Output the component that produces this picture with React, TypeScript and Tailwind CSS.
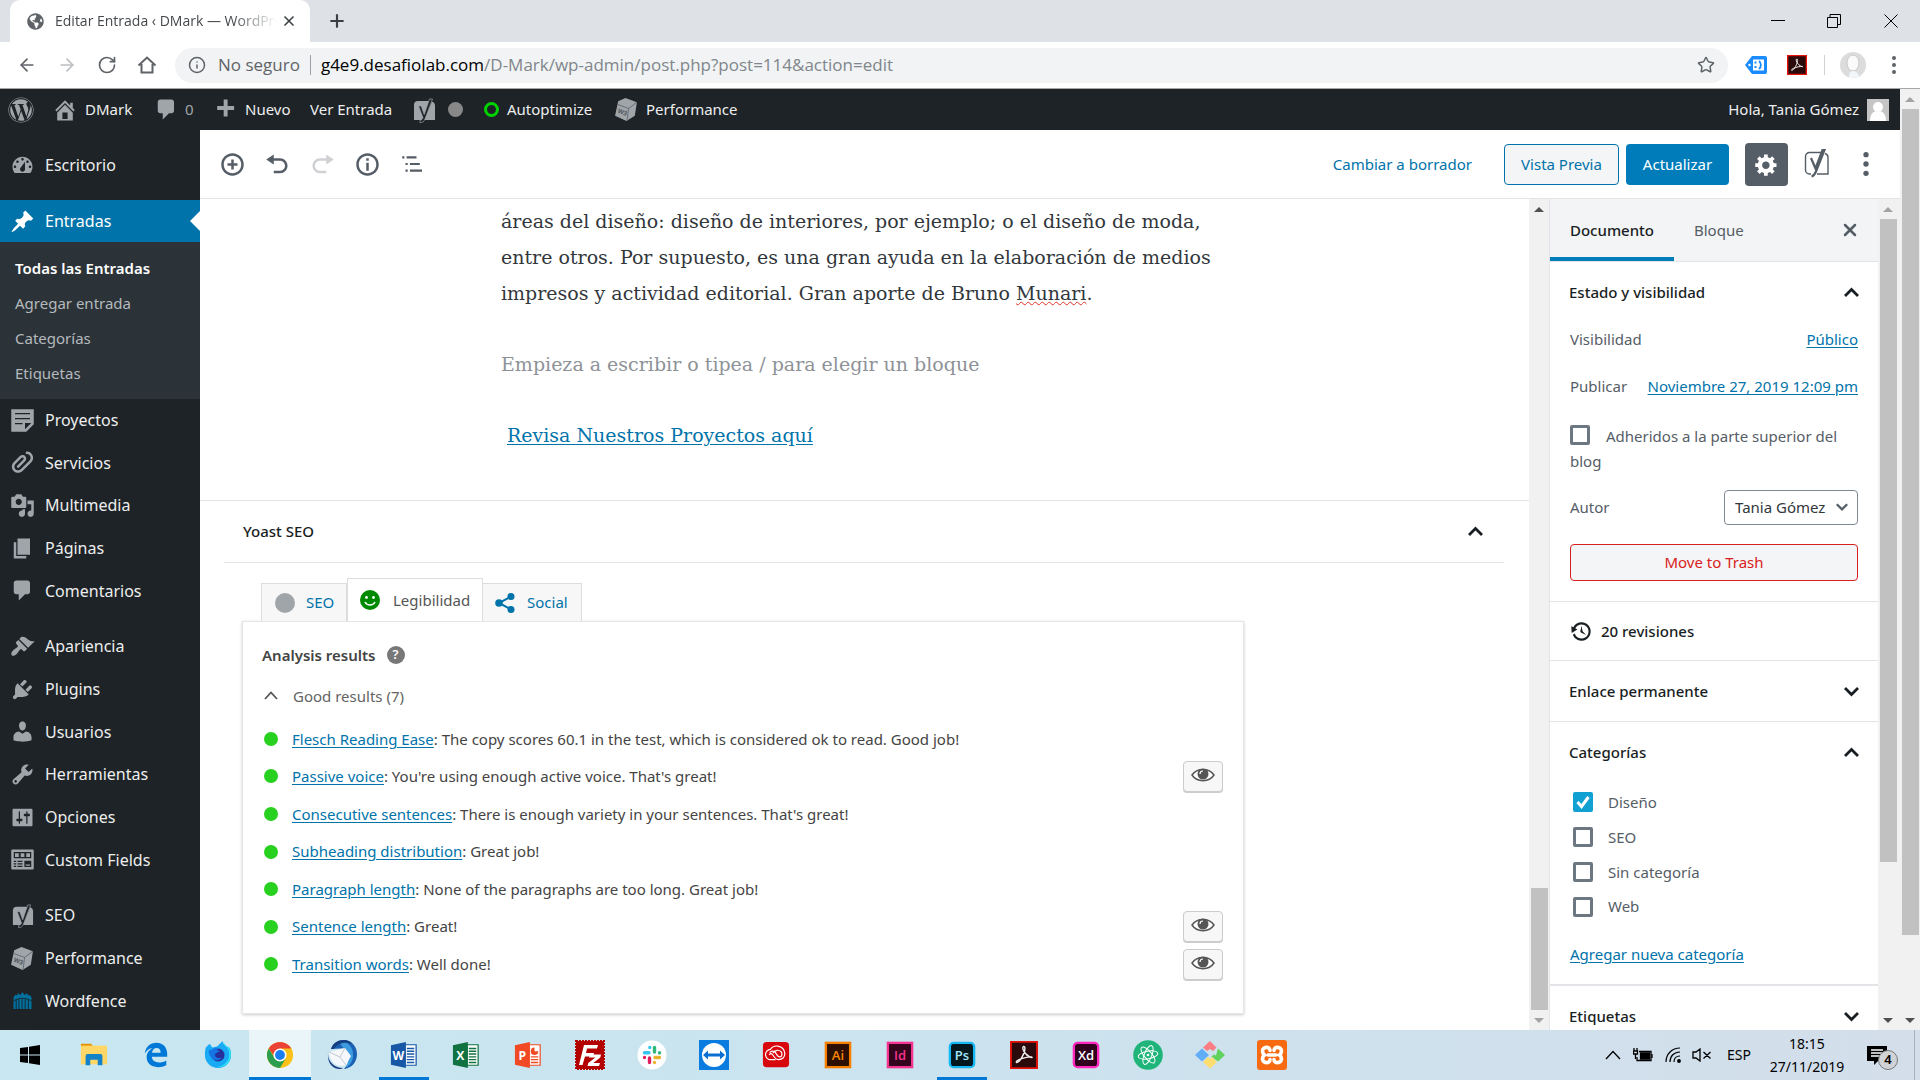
import React from "react";
import { ArrowLeft, ArrowRight, RotateCw, Info, Star, X, Plus } from "lucide-react";
import { FaWordpress, FaGlobeAmericas } from "react-icons/fa";

const ICONS = {
  dashboard:
    "M3.76 16h12.48c1.1-1.37 1.76-3.11 1.76-5 0-4.42-3.58-8-8-8s-8 3.58-8 8c0 1.89.66 3.63 1.76 5zM10 4c.55 0 1 .45 1 1s-.45 1-1 1-1-.45-1-1 .45-1 1-1zM6 6c.55 0 1 .45 1 1s-.45 1-1 1-1-.45-1-1 .45-1 1-1zm8 0c.55 0 1 .45 1 1s-.45 1-1 1-1-.45-1-1 .45-1 1-1zm-5.37 5.55L12 7v6c0 1.1-.9 2-2 2s-2-.9-2-2c0-.57.24-1.08.63-1.45zM4 10c.55 0 1 .45 1 1s-.45 1-1 1-1-.45-1-1 .45-1 1-1zm12 0c.55 0 1 .45 1 1s-.45 1-1 1-1-.45-1-1 .45-1 1-1z",
  home: "M16 8.5l1.53 1.53-1.06 1.06L10 4.6l-6.47 6.49-1.06-1.06L10 2.5l4 4v-2h2v4zm-6-2.46l6 5.99V18H4v-5.97zM12 17v-5H8v5h4z",
  comment: "M5 2h9c1.1 0 2 .9 2 2v7c0 1.1-.9 2-2 2h-2l-5 5v-5H5c-1.1 0-2-.9-2-2V4c0-1.1.9-2 2-2z",
  plus: "M17 7v3h-5v5H9v-5H4V7h5V2h3v5h5z",
  pin: "M10.44 3.02l1.82-1.82 6.36 6.35-1.83 1.82c-1.05-.68-2.48-.57-3.41.36l-.75.75c-.92.93-1.04 2.35-.35 3.41l-1.83 1.82-2.41-2.41-2.8 2.79c-.42.42-3.38 2.71-3.8 2.29s1.86-3.39 2.28-3.81l2.79-2.79L4.1 9.36l1.83-1.82c1.05.69 2.48.57 3.4-.36l.75-.75c.93-.92 1.05-2.35.36-3.41z",
  note: "M1 1h18v12l-6 6H1V1zm3 3v1h12V4H4zm0 4v1h12V8H4zm0 4v1h6v-1H4zm8 5l5-5h-5v5z",
  clip: "M17.05 2.7c1.93 1.94 1.93 5.13 0 7.07L10 16.84c-1.88 1.89-4.91 1.93-6.86.15-.06-.05-.13-.09-.19-.15-1.93-1.94-1.93-5.12 0-7.07l4.94-4.95c.91-.92 2.28-1.1 3.39-.58.3.15.59.33.83.58 1.17 1.17 1.17 3.07 0 4.24l-4.93 4.95c-.39.39-1.02.39-1.41 0s-.39-1.02 0-1.41l4.93-4.95c.39-.39.39-1.02 0-1.41-.38-.39-1.02-.39-1.4 0l-4.94 4.95c-.91.92-1.1 2.29-.57 3.4.14.3.32.59.57.84s.54.43.84.57c1.11.53 2.47.35 3.39-.57l7.05-7.07c1.16-1.17 1.16-3.08 0-4.25-.56-.55-1.28-.83-2-.86-.08.01-.16.01-.24 0-.22-.03-.43-.11-.6-.27-.39-.4-.38-1.05.02-1.45.16-.16.36-.24.56-.28.14-.02.27-.01.4.02 1.19.06 2.36.52 3.27 1.43z",
  media:
    "M13 11V4c0-.55-.45-1-1-1h-1.67L9 1H5L3.67 3H2c-.55 0-1 .45-1 1v7c0 .55.45 1 1 1h10c.55 0 1-.45 1-1zM7 4.5c1.38 0 2.5 1.12 2.5 2.5S8.38 9.5 7 9.5 4.5 8.38 4.5 7 5.62 4.5 7 4.5zM14 6h5v10.5c0 1.38-1.12 2.5-2.5 2.5S14 17.88 14 16.5s1.12-2.5 2.5-2.5c.17 0 .34.02.5.05V9h-3V6zm-4 8.05V13h2v3.5c0 1.38-1.12 2.5-2.5 2.5S7 17.88 7 16.5 8.12 14 9.5 14c.17 0 .34.02.5.05z",
  page: "M6 15V2h10v13H6zm-1 1h8v2H3V5h2v11z",
  brush:
    "M14.48 11.06L7.41 3.99l1.5-1.5c.5-.56 2.3-.47 3.51.32 1.21.8 1.43 1.28 2.91 2.1 1.18.64 2.45 1.26 4.45.85zm-.71.71L6.7 4.7 4.93 6.47c-.39.39-.39 1.02 0 1.41l1.06 1.06c.39.39.39 1.03 0 1.42-.6.6-1.43 1.11-2.21 1.69-.35.26-.7.53-1.01.84C1.43 14.23.4 16.08 1.4 17.07c.99 1 2.84-.03 4.18-1.36.31-.31.58-.66.85-1.02.57-.78 1.08-1.61 1.69-2.21.39-.39 1.02-.39 1.41 0l1.06 1.06c.39.39 1.02.39 1.41 0z",
  plug: "M13.11 4.36L9.87 7.6 8 5.73l3.24-3.24c.35-.34 1.05-.2 1.56.32.52.51.66 1.21.31 1.55zm-8 1.77l.91-1.12 9.01 9.01-1.19.84c-.71.71-2.63 1.16-3.82 1.16H6.14L4.9 17.26c-.59.59-1.54.59-2.12 0-.59-.58-.59-1.53 0-2.12l1.24-1.24v-3.88c0-1.13.4-3.19 1.09-3.89zm7.26 3.97l3.24-3.24c.34-.35 1.04-.21 1.55.31.52.51.66 1.21.31 1.55l-3.24 3.25z",
  user: "M10 9.25c-2.27 0-2.73-3.44-2.73-3.44C7 4.02 7.82 2 9.97 2c2.16 0 2.98 2.02 2.71 3.81 0 0-.41 3.44-2.68 3.44zm0 2.57L12.72 10c2.39 0 4.52 2.33 4.52 4.53v2.49s-3.65 1.13-7.24 1.13c-3.65 0-7.24-1.13-7.24-1.13v-2.49c0-2.25 1.94-4.48 4.47-4.48z",
  wrench:
    "M16.68 9.77c-1.34 1.34-3.3 1.67-4.95.99l-5.41 6.52c-.99.99-2.59.99-3.58 0s-.99-2.59 0-3.57l6.52-5.42c-.68-1.65-.35-3.61.99-4.95 1.28-1.28 3.12-1.62 4.72-1.06l-2.89 2.89 2.82 2.82 2.86-2.87c.53 1.58.18 3.39-1.08 4.65zM3.81 16.21c.4.39 1.04.39 1.43 0 .4-.4.4-1.04 0-1.43-.39-.4-1.03-.4-1.43 0-.39.39-.39 1.03 0 1.43z",
  sliders:
    "M18 16V4c0-.55-.45-1-1-1H3c-.55 0-1 .45-1 1v12c0 .55.45 1 1 1h14c.55 0 1-.45 1-1zM8 11h1c.55 0 1 .45 1 1s-.45 1-1 1H8v1.5c0 .28-.22.5-.5.5s-.5-.22-.5-.5V13H6c-.55 0-1-.45-1-1s.45-1 1-1h1V5.5c0-.28.22-.5.5-.5s.5.22.5.5V11zm5-2h-1c-.55 0-1-.45-1-1s.45-1 1-1h1V5.5c0-.28.22-.5.5-.5s.5.22.5.5V7h1c.55 0 1 .45 1 1s-.45 1-1 1h-1v5.5c0 .28-.22.5-.5.5s-.5-.22-.5-.5V9z",
  fields:
    "M2 2h16c.6 0 1 .4 1 1v14c0 .6-.4 1-1 1H2c-.6 0-1-.4-1-1V3c0-.6.4-1 1-1zm1 2v5h14V4H3zm1 1h3v3H4V5zm4.500 0h3v3h-3V5zM13 5h3v3h-3V5zM3 11v1h2v-1H3zm3 0v1h4v-1H6zm-3 2v1h2v-1H3zm3 0v1h4v-1H6zm-3 2v1h2v-1H3zm3 0v1h4v-1H6zm5.500-4v5H17v-5h-5.500zm1 3H16v1h-3.500v-1z",
  history:
    "M13.65 2.88c3.93 2.01 5.48 6.84 3.47 10.77s-6.83 5.48-10.77 3.47c-1.87-.96-3.2-2.56-3.86-4.4l1.64-1.03c.45 1.57 1.52 2.95 3.08 3.76 3.01 1.54 6.69.35 8.23-2.66 1.55-3.01.36-6.69-2.65-8.24C9.78 3.01 6.1 4.2 4.56 7.21l1.88.97-4.95 3.08-.39-5.82 1.78.91C4.9 2.4 9.75.89 13.65 2.88zm-4.36 7.83C9.11 10.53 9 10.28 9 10c0-.07.03-.12.04-.19h-.01L10 5l.97 4.81L14 13l-4.5-2.12.02-.02c-.08-.04-.16-.09-.23-.15z",
  insert:
    "M10 1c-5 0-9 4-9 9s4 9 9 9 9-4 9-9-4-9-9-9zm0 16c-3.9 0-7-3.1-7-7s3.1-7 7-7 7 3.1 7 7-3.1 7-7 7zm1-11H9v3H6v2h3v3h2v-3h3V9h-3V6z",
  undo: "M12 5H7V2L1 6l6 4V7h5c2.2 0 4 1.8 4 4s-1.8 4-4 4H7v2h5c3.3 0 6-2.7 6-6s-2.7-6-6-6z",
  redo: "M8 5h5V2l6 4-6 4V7H8c-2.200 0-4 1.800-4 4s1.800 4 4 4h5v2H8c-3.300 0-6-2.700-6-6s2.700-6 6-6z",
  info: "M10 1c-5 0-9 4-9 9s4 9 9 9 9-4 9-9-4-9-9-9zm0 16c-3.9 0-7-3.1-7-7s3.1-7 7-7 7 3.1 7 7-3.1 7-7 7zM9 5h2v2H9zM9 8.500h2V15H9z",
  outline: "M2 3h2v2H2zM6 3h9v2H6zM5 9h2v2H5zM9 9h9v2H9zM5 15h2v2H5zM9 15h11v2H9z",
  gear: "M18 12h-2.18c-.17.7-.44 1.35-.81 1.93l1.54 1.54-2.1 2.1-1.54-1.54c-.58.36-1.23.63-1.91.79V19H8v-2.18c-.68-.16-1.33-.43-1.91-.79l-1.54 1.54-2.12-2.12 1.54-1.54c-.36-.58-.63-1.23-.79-1.91H1V9.03h2.17c.16-.7.44-1.35.8-1.94L2.43 5.55l2.1-2.1 1.54 1.54c.58-.37 1.24-.64 1.93-.81V2h3v2.18c.68.16 1.33.43 1.91.79l1.54-1.54 2.12 2.12-1.54 1.54c.36.59.64 1.24.8 1.94H18V12zm-8.5 1.5c1.66 0 3-1.34 3-3s-1.34-3-3-3-3 1.34-3 3 1.34 3 3 3z",
};

function Dash({ d, className = "size-[25px]" }: { d: string; className?: string }) {
  return (
    <svg viewBox="0 0 20 20" className={`${className} shrink-0`} fill="currentColor" fillRule="evenodd" aria-hidden="true">
      <path d={d} />
    </svg>
  );
}

function Yoast({ className = "size-[25px]" }: { className?: string }) {
  return (
    <svg viewBox="0 0 24 26" className={`${className} shrink-0`} aria-hidden="true">
      <path d="M6 4h12.500L10.500 23H2V8a4 4 0 0 1 4-4zM20 4.500A4 4 0 0 1 23 8v15H12z" fill="currentColor" />
      <path d="M6.500 9h2.700l3 8.500L17.500 2h3L13 22c-1.100 2.700-2.600 3.700-5 3.800v-2.500c1.500-.2 2.300-.9 3-2.500z" fill="#1d2327" stroke="#a0a5aa" strokeWidth=".7" />
    </svg>
  );
}

function YoastOutline() {
  return (
    <svg viewBox="0 0 26 30" className="h-[30px] w-[26px]" fill="none" stroke="#555d66" aria-hidden="true">
      <path d="M17 3.500H5.500a4 4 0 0 0-4 4V21a4 4 0 0 0 4 4H7M21 4.500c2 .7 3 2 3 4V25H13" strokeWidth="1.400" />
      <path d="M7 9l4.500 10.500L18.500 1h2L12 22.500c-1.300 3.300-2.800 4.500-4.500 4.800" strokeWidth="2.200" />
    </svg>
  );
}

function Cube() {
  return (
    <svg viewBox="0 0 24 24" className="size-[25px] shrink-0" aria-hidden="true">
      <path d="M4 4l7-3 11 4-2 13-8 5L1 18z" fill="#a0a5aa" />
      <path d="M3 7l11 4 8-6M14 11l-1.500 12" stroke="#5d6268" strokeWidth=".8" fill="none" />
      <text x="3" y="15" fontSize="6" fontWeight="700" fill="#50565c" transform="rotate(20 3 15)" fontFamily="Open Sans">W3</text>
    </svg>
  );
}

function Fence() {
  return (
    <svg viewBox="0 0 24 20" className="h-[18px] w-[25px] shrink-0" fill="#00709e" aria-hidden="true">
      <path d="M2 6l2-3 2 1 1-3 2 2h1l2-3 2 3h1l2-2 1 3 2-1 2 3v13H2z" />
      <path d="M5 8v11M8 8v11M11.500 8v11M15 8v11M18.500 8v11M2 10c6-4 14-4 20 0" stroke="#1d2327" strokeWidth="1" fill="none" />
    </svg>
  );
}

function Chevron({ up = false, className = "size-[25px]" }: { up?: boolean; className?: string }) {
  return (
    <svg viewBox="0 0 25 25" className={`${className} shrink-0`} fill="none" stroke="currentColor" strokeWidth="2.800" aria-hidden="true">
      <path d={up ? "M6 16l6.500-6.500L19 16" : "M6 9l6.500 6.500L19 9"} />
    </svg>
  );
}

function Arrow({ up = false, dark = false }: { up?: boolean; dark?: boolean }) {
  return (
    <svg viewBox="0 0 20 20" className="size-5" fill={dark ? "#505050" : "#a3a3a3"} aria-hidden="true">
      <path d={up ? "M5 13h10l-5-5z" : "M5 8h10l-5 5z"} />
    </svg>
  );
}

function Scrollbar({ top, bottom, size, upDark, downDark }: { top: string; bottom: string; size: string; upDark?: boolean; downDark?: boolean }) {
  return (
    <div className="flex w-5 shrink-0 flex-col items-center bg-[#f1f1f1]">
      <Arrow up dark={upDark} />
      <div className={`${top}`} />
      <div className={`${size} w-[17px] bg-[#c1c1c1]`} />
      <div className={`${bottom}`} />
      <Arrow dark={downDark} />
    </div>
  );
}

function ChromeBar() {
  return (
    <header className="font-['Open_Sans',sans-serif]">
      <div className="flex h-[42px] items-stretch bg-[#dee1e6] pl-[10px]">
        <div className="flex w-[300px] items-center rounded-t-[10px] bg-white pr-[13px] pl-[17px] text-sm text-[#45494d]">
          <FaGlobeAmericas className="size-[17px] shrink-0 text-[#5f6368]" />
          <span className="ml-[11px] flex-1 overflow-hidden whitespace-nowrap [mask-image:linear-gradient(to_right,black_80%,transparent)]">
            Editar Entrada ‹ DMark — WordPress
          </span>
          <button aria-label="Cerrar pestaña" className="ml-1"><X className="size-4 text-[#3c4043]" strokeWidth={2.5} /></button>
        </div>
        <button aria-label="Nueva pestaña" className="ml-[17px]"><Plus className="size-5 text-[#3c4043]" strokeWidth={2.6} /></button>
        <div className="ml-auto flex items-center text-black">
          <button aria-label="Minimizar" className="flex w-14 justify-center"><svg viewBox="0 0 14 14" className="size-[14px]"><path d="M0 6.500h14" stroke="currentColor" /></svg></button>
          <button aria-label="Restaurar" className="flex w-14 justify-center"><svg viewBox="0 0 14 14" className="size-[14px]" fill="none" stroke="currentColor"><path d="M.5 3.500h10v10H.5zM3 3.500V.5h10.500v10H11" /></svg></button>
          <button aria-label="Cerrar" className="flex w-[58px] justify-center"><svg viewBox="0 0 14 14" className="size-[14px]" fill="none" stroke="currentColor"><path d="M.5.5l13 13M13.500.5l-13 13" /></svg></button>
        </div>
      </div>
      <div className="flex h-[47px] items-center border-b border-[#a6a6a6] bg-white text-[#5f6368]">
        <button aria-label="Atrás" className="ml-[17px]"><ArrowLeft className="size-5" /></button>
        <button aria-label="Adelante" className="ml-5 text-[#bcbec1]"><ArrowRight className="size-5" /></button>
        <button aria-label="Recargar" className="ml-5"><RotateCw className="size-5" /></button>
        <button aria-label="Inicio" className="ml-5">
          <svg viewBox="0 0 20 20" className="size-5" fill="none" stroke="currentColor" strokeWidth="2"><path d="M1.500 10.500L10 2.500l8.500 8M4.500 9v8.500h11V9" /></svg>
        </button>
        <div className="ml-[18px] flex h-[35px] flex-1 items-center rounded-full bg-[#f1f3f4] px-[13px] text-[17px]">
          <Info className="size-[18px]" />
          <span className="ml-3">No seguro</span>
          <span className="mx-[10px] h-5 w-px bg-[#9aa0a6]" />
          <p className="flex-1"><span className="text-black">g4e9.desafiolab.com</span><span className="text-[#80868b]">/D-Mark/wp-admin/post.php?post=114&amp;action=edit</span></p>
          <button aria-label="Marcador"><Star className="size-[18px]" /></button>
        </div>
        <svg viewBox="0 0 22 18" className="ml-[17px] h-[18px] w-[22px]" aria-hidden="true">
          <path d="M7 0h13a2 2 0 0 1 2 2v14a2 2 0 0 1-2 2H7L0 9z" fill="#1a8cff" /><path d="M8 3.500h11v11H8z" fill="#fff" />
          <path d="M9.500 5.500h2v2h-2zM9.500 10h2v2h-2z" fill="#1a8cff" /><path d="M14 5c2.500 2 2.500 6 0 8" fill="none" stroke="#1a8cff" strokeWidth="1.800" /><circle cx="4.500" cy="9" r="1.200" fill="#fff" />
        </svg>
        <svg viewBox="0 0 30 30" className="ml-5 size-5" aria-hidden="true"><AcrobatArt /></svg>
        <span className="ml-[17px] h-5 w-px bg-[#d0d2d5]" />
        <svg viewBox="0 0 26 26" className="ml-[15px] size-[26px]" aria-hidden="true">
          <circle cx="13" cy="13" r="13" fill="#dcdcdc" /><ellipse cx="13" cy="11" rx="6" ry="8" fill="#fafafa" stroke="#c9c9c9" /><path d="M9 26c0-5 1-7 4-7s5 2 6 5c-3 2-7 2-10 2z" fill="#f1f6fa" />
        </svg>
        <button aria-label="Menú" className="mr-[6px] ml-2 flex w-10 justify-center"><Dots className="h-[18px] w-1" /></button>
      </div>
    </header>
  );
}

function Dots({ className }: { className: string }) {
  return (
    <svg viewBox="0 0 4 18" className={className} fill="currentColor" aria-hidden="true">
      <circle cx="2" cy="2" r="2" /><circle cx="2" cy="9" r="2" /><circle cx="2" cy="16" r="2" />
    </svg>
  );
}

function AdminBar() {
  return (
    <nav className="flex h-[41px] items-center bg-[#1d2327] pl-2 text-[15px] text-[#eee]">
      <a href="#wp" aria-label="WordPress"><FaWordpress className="size-[26px] text-[#a0a5aa]" /></a>
      <a href="#site" className="ml-[18px] flex w-[102px] items-center gap-[7px]"><Dash d={ICONS.home} className="size-[26px] text-[#a0a5aa]" />DMark</a>
      <a href="#comments" className="flex w-[58px] items-center gap-[6px] text-[#a0a5aa]"><Dash d={ICONS.comment} />0</a>
      <a href="#new" className="flex w-[98px] items-center gap-[7px]"><Dash d={ICONS.plus} className="size-[26px] text-[#a0a5aa]" />Nuevo</a>
      <a href="#view" className="w-[102px]">Ver Entrada</a>
      <a href="#yoast" className="flex w-[72px] items-center gap-3 text-[#a0a5aa]"><Yoast className="h-[26px] w-6" /><span className="size-[15px] rounded-full bg-[#888]" /></a>
      <a href="#autoptimize" className="flex w-[130px] items-center gap-2"><span className="size-[15px] rounded-full border-3 border-[#00d200]" />Autoptimize</a>
      <a href="#performance" className="flex items-center gap-[7px]"><Cube />Performance</a>
      <a href="#profile" className="mr-[11px] ml-auto flex items-center gap-2">
        Hola, Tania Gómez
        <svg viewBox="0 0 22 22" className="size-[22px]" aria-hidden="true"><path d="M0 0h22v22H0z" fill="#c5c5c5" /><circle cx="11" cy="8" r="5" fill="#fff" /><path d="M3 22c0-7 3-10 8-10s8 3 8 10z" fill="#fff" /></svg>
      </a>
    </nav>
  );
}

function MenuItem({ icon, children }: { icon: React.ReactNode; children: React.ReactNode }) {
  return (
    <a href="#menu" className="flex flex-1 items-center gap-[10px] pl-[10px] text-[#eee]">
      <span className="flex w-[25px] justify-center text-[#a0a5aa]">{icon}</span>
      {children}
    </a>
  );
}

function AdminMenu() {
  return (
    <aside className="flex w-[200px] shrink-0 flex-col bg-[#1d2327] text-base">
      <div className="mt-[14px] flex h-[42px]"><MenuItem icon={<Dash d={ICONS.dashboard} />}>Escritorio</MenuItem></div>
      <div className="relative mt-[14px] flex h-[42px] items-center gap-[10px] bg-[#0073aa] pl-[10px] text-white">
        <Dash d={ICONS.pin} />
        <a href="#posts">Entradas</a>
        <span className="absolute top-[11px] right-0 border-y-10 border-r-10 border-y-transparent border-r-white" />
      </div>
      <div className="flex h-[157px] flex-col justify-between bg-[#2c3338] py-[9px] pl-[15px] text-[15px] leading-[35px] text-[#b4b9be]">
        <a href="#all" className="font-semibold text-white">Todas las Entradas</a>
        <a href="#add">Agregar entrada</a>
        <a href="#cats">Categorías</a>
        <a href="#tags">Etiquetas</a>
      </div>
      <div className="flex h-[213px] flex-col">
        <MenuItem icon={<Dash d={ICONS.note} />}>Proyectos</MenuItem>
        <MenuItem icon={<Dash d={ICONS.clip} />}>Servicios</MenuItem>
        <MenuItem icon={<Dash d={ICONS.media} />}>Multimedia</MenuItem>
        <MenuItem icon={<Dash d={ICONS.page} />}>Páginas</MenuItem>
        <MenuItem icon={<Dash d={ICONS.comment} />}>Comentarios</MenuItem>
      </div>
      <div className="mt-[13px] flex h-[256px] flex-col">
        <MenuItem icon={<Dash d={ICONS.brush} />}>Apariencia</MenuItem>
        <MenuItem icon={<Dash d={ICONS.plug} />}>Plugins</MenuItem>
        <MenuItem icon={<Dash d={ICONS.user} />}>Usuarios</MenuItem>
        <MenuItem icon={<Dash d={ICONS.wrench} />}>Herramientas</MenuItem>
        <MenuItem icon={<Dash d={ICONS.sliders} />}>Opciones</MenuItem>
        <MenuItem icon={<Dash d={ICONS.fields} />}>Custom Fields</MenuItem>
      </div>
      <div className="mt-[13px] flex h-[128px] flex-col">
        <MenuItem icon={<Yoast />}>SEO</MenuItem>
        <MenuItem icon={<Cube />}>Performance</MenuItem>
        <MenuItem icon={<Fence />}>Wordfence</MenuItem>
      </div>
    </aside>
  );
}

function EditorHeader() {
  return (
    <div className="flex h-[69px] shrink-0 items-center border-b border-[#e2e4e7] bg-white pl-5 text-[15px]">
      <div className="flex gap-5 text-[#555d66]">
        <button aria-label="Añadir bloque"><Dash d={ICONS.insert} /></button>
        <button aria-label="Deshacer"><Dash d={ICONS.undo} /></button>
        <button aria-label="Rehacer" className="text-[#cfd1d4]"><Dash d={ICONS.redo} /></button>
        <button aria-label="Información"><Dash d={ICONS.info} /></button>
        <button aria-label="Navegación"><Dash d={ICONS.outline} className="size-[22px]" /></button>
      </div>
      <a href="#draft" className="mr-8 ml-auto text-[#0073aa]">Cambiar a borrador</a>
      <button className="h-[41px] w-[115px] rounded-[4px] border border-[#0073aa] bg-[#f3f5f6] text-[#0073aa]">Vista Previa</button>
      <button className="ml-[7px] h-[41px] w-[103px] rounded-[4px] bg-[#007cba] text-white">Actualizar</button>
      <button aria-label="Ajustes" className="ml-4 flex size-[43px] items-center justify-center rounded-[4px] bg-[#555d66] text-white"><Dash d={ICONS.gear} /></button>
      <button aria-label="Yoast SEO" className="ml-4"><YoastOutline /></button>
      <button aria-label="Más opciones" className="mr-[31px] ml-[33px] text-[#555d66]"><Dots className="h-6 w-[6px]" /></button>
    </div>
  );
}

const RESULTS = [
  { name: "Flesch Reading Ease", text: "The copy scores 60.1 in the test, which is considered ok to read. Good job!" },
  { name: "Passive voice", text: "You're using enough active voice. That's great!", eye: true },
  { name: "Consecutive sentences", text: "There is enough variety in your sentences. That's great!" },
  { name: "Subheading distribution", text: "Great job!" },
  { name: "Paragraph length", text: "None of the paragraphs are too long. Great job!" },
  { name: "Sentence length", text: "Great!", eye: true },
  { name: "Transition words", text: "Well done!", eye: true },
];

function Eye() {
  return (
    <svg viewBox="0 0 24 14" className="h-[14px] w-6" aria-hidden="true">
      <path d="M1 7c5-7.500 17-7.500 22 0-5 7.500-17 7.500-22 0z" fill="#fff" stroke="#555" strokeWidth="1.500" />
      <circle cx="12" cy="6" r="5.500" fill="#555" />
      <path d="M9 6c0-2 1-3 3-3" stroke="#fff" strokeWidth="1.200" fill="none" />
    </svg>
  );
}

function YoastPanel() {
  return (
    <section className="border-t border-[#e2e4e7] pr-[25px] pl-6 text-[15px]">
      <div className="flex h-[62px] items-center justify-between border-b border-[#e2e4e7] pr-4 pl-[19px] text-[#191e23]">
        <h2 className="font-medium">Yoast SEO</h2>
        <button aria-label="Contraer"><Chevron up /></button>
      </div>
      <div className="mt-[15px] ml-[37px] flex items-end text-[#0073aa]" role="tablist">
        <button role="tab" className="flex h-[38px] w-[86px] items-center gap-[11px] border border-b-0 border-[#ddd] bg-[#f7f7f7] pl-[13px]"><span className="size-5 rounded-full bg-[#a0a5aa]" />SEO</button>
        <button role="tab" aria-selected="true" className="flex h-[43px] w-[136px] items-center gap-[13px] border border-b-0 border-[#ddd] bg-white pl-3 text-[#555]">
          <svg viewBox="0 0 20 20" className="size-5" aria-hidden="true"><circle cx="10" cy="10" r="10" fill="#008a00" /><circle cx="6.500" cy="7.500" r="1.400" fill="#fff" /><circle cx="13.500" cy="7.500" r="1.400" fill="#fff" /><path d="M5 12c2 4 8 4 10 0" stroke="#fff" strokeWidth="1.600" fill="none" /></svg>
          Legibilidad
        </button>
        <button role="tab" className="flex h-[38px] w-[99px] items-center gap-3 border border-b-0 border-l-0 border-[#ddd] bg-[#f7f7f7] pl-3">
          <svg viewBox="0 0 20 20" className="size-5" fill="#0073aa" aria-hidden="true"><circle cx="4" cy="10" r="3.800" /><circle cx="16" cy="3.500" r="3.500" /><circle cx="16" cy="16.500" r="3.500" /><path d="M16 3.500L4 10l12 6.500" stroke="#0073aa" strokeWidth="2" fill="none" /></svg>
          Social
        </button>
      </div>
      <div className="ml-[18px] h-[393px] w-[1002px] border border-[#e5e5e5] bg-white px-[19px] pt-[19px] text-[#444] shadow-[0_1px_3px_rgba(0,0,0,0.2)]">
        <div className="flex h-7 items-center gap-[11px] font-semibold">
          Analysis results
          <span className="flex size-[18px] items-center justify-center rounded-full bg-[#787878] text-[13px] text-white">?</span>
        </div>
        <button className="mt-3 flex h-[30px] items-center gap-[13px] text-[#646464]">
          <svg viewBox="0 0 18 18" className="size-[18px]" fill="none" stroke="#555" strokeWidth="1.800" aria-hidden="true"><path d="M3 12l6-6.500L15 12" /></svg>
          Good results (7)
        </button>
        <ul className="mt-[9px] flex h-[263px] flex-col pr-px">
          {RESULTS.map((r) => (
            <li key={r.name} className="flex flex-1 items-center">
              <span className="mr-[14px] ml-[2px] size-[14px] rounded-full bg-[#28d01f]" />
              <p className="flex-1"><a href="#result" className="text-[#0073aa] underline underline-offset-2">{r.name}</a>: {r.text}</p>
              {r.eye && <button aria-label={`Resaltar ${r.name}`} className="flex h-[31px] w-10 justify-center rounded-[4px] border border-[#ccc] bg-[#f7f7f7] pt-[6px] shadow-[0_1px_0_#ccc]"><Eye /></button>}
            </li>
          ))}
        </ul>
      </div>
    </section>
  );
}

function Editor() {
  return (
    <main className="min-w-0 flex-1 overflow-hidden bg-white">
      <div className="h-[301px] pt-1 pl-[301px] font-['DejaVu_Serif',serif] text-[19px] leading-9 whitespace-nowrap text-[#32373c]">
        <p>
          áreas del diseño: diseño de interiores, por ejemplo; o el diseño de moda,<br />
          entre otros. Por supuesto, es una gran ayuda en la elaboración de medios<br />
          impresos y actividad editorial. Gran aporte de Bruno <span className="underline decoration-[#e0302a] decoration-wavy decoration-1">Munari</span>.
        </p>
        <p className="mt-[35px] text-[#8d9297]">Empieza a escribir o tipea / para elegir un bloque</p>
        <p className="mt-[35px] pl-[6px]"><a href="#proyectos" className="text-[#0073aa] underline underline-offset-2">Revisa Nuestros Proyectos aquí</a></p>
      </div>
      <YoastPanel />
    </main>
  );
}

function Check({ id, label, checked, gap }: { id: string; label: string; checked?: boolean; gap: string }) {
  return (
    <>
      <span className={`relative ${gap} inline-flex size-5 shrink-0 align-[-3px]`}>
        <input id={id} type="checkbox" defaultChecked={checked} className="size-5 appearance-none rounded-[2px] border-3 border-[#6c7781] bg-white checked:border-[#11a0d2] checked:bg-[#11a0d2]" />
        {checked && <svg viewBox="0 0 20 20" className="pointer-events-none absolute inset-0 size-5" fill="none" stroke="#fff" strokeWidth="3" aria-hidden="true"><path d="M4.500 10l4 4.500L15.500 5" /></svg>}
      </span>
      <label htmlFor={id}>{label}</label>
    </>
  );
}

function PanelTitle({ children, open }: { children: React.ReactNode; open?: boolean }) {
  return (
    <button className="flex h-[60px] w-full items-center justify-between pr-[14px] pl-[19px] font-medium text-[#191e23]">
      {children}
      <Chevron up={open} />
    </button>
  );
}

function DocumentSidebar() {
  return (
    <aside className="w-[329px] shrink-0 overflow-hidden border-l border-[#e2e4e7] bg-white text-[15px] text-[#555d66]">
      <div className="flex h-[63px] items-stretch border-b border-[#e2e4e7] bg-[#f3f4f5]">
        <button className="w-[124px] border-b-4 border-[#007cba] pt-1 font-medium text-[#191e23]">Documento</button>
        <button className="px-5 pt-1 pb-1">Bloque</button>
        <button aria-label="Cerrar ajustes" className="mr-[18px] ml-auto"><X className="size-5" strokeWidth={3} /></button>
      </div>
      <section className="h-[340px] border-b border-[#e2e4e7]">
        <PanelTitle open>Estado y visibilidad</PanelTitle>
        <div className="px-5">
          <div className="flex h-[34px] items-center justify-between"><span>Visibilidad</span><a href="#vis" className="text-[#0073aa] underline underline-offset-2">Público</a></div>
          <div className="mt-[13px] flex h-[34px] items-center justify-between whitespace-nowrap"><span>Publicar</span><a href="#date" className="text-[#0073aa] underline underline-offset-2">Noviembre 27, 2019 12:09 pm</a></div>
          <p className="mt-[21px] leading-[25px]"><Check id="sticky" label="Adheridos a la parte superior del blog" gap="mr-4" /></p>
          <div className="mt-4 flex h-[35px] items-center justify-between">
            <label htmlFor="author">Autor</label>
            <span className="relative flex">
              <select id="author" className="h-[35px] w-[134px] appearance-none rounded-[4px] border border-[#7e8993] bg-white pl-[10px] text-[#32373c]"><option>Tania Gómez</option></select>
              <Chevron className="pointer-events-none absolute top-[7px] right-[6px] size-5" />
            </span>
          </div>
          <button className="mt-[19px] h-[37px] w-full rounded-[4px] border border-[#d92020] bg-[#f3f5f6] text-[#d92020]">Move to Trash</button>
        </div>
      </section>
      <button className="flex h-[59px] w-full items-center gap-2 border-b border-[#e2e4e7] pl-5 font-medium text-[#191e23]"><Dash d={ICONS.history} className="size-[23px]" />20 revisiones</button>
      <div className="border-b border-[#e2e4e7]"><PanelTitle>Enlace permanente</PanelTitle></div>
      <section className="h-[264px] border-b-2 border-[#e2e4e7]">
        <PanelTitle open>Categorías</PanelTitle>
        <ul className="mt-[3px] flex h-[139px] flex-col pl-[23px]">
          {["Diseño", "SEO", "Sin categoría", "Web"].map((c, i) => (
            <li key={c} className="flex flex-1 items-center"><Check id={`cat-${i}`} label={c} checked={i === 0} gap="mr-[15px]" /></li>
          ))}
        </ul>
        <a href="#newcat" className="mt-[19px] ml-5 inline-block text-[#0073aa] underline underline-offset-2">Agregar nueva categoría</a>
      </section>
      <PanelTitle>Etiquetas</PanelTitle>
    </aside>
  );
}

function AcrobatArt() {
  return (
    <>
      <path d="M1 1h28v28H1z" fill="#2a0a0a" stroke="#e8140c" strokeWidth="2" />
      <path d="M7 23c-2-2 9-6 16-6 3 2-6 0-9-8-1-4 2-4 2-1 0 4-5 15-9 15z" fill="none" stroke="#eee" strokeWidth="1.500" />
    </>
  );
}

function Adobe({ text, edge, bg, fg, round }: { text: string; edge: string; bg: string; fg: string; round?: boolean }) {
  return (
    <>
      <rect x="2" y="2" width="26" height="26" rx={round ? 4 : 0} fill={bg} stroke={edge} strokeWidth="2.500" />
      <text x="15" y="20" textAnchor="middle" fontFamily="Open Sans" fontSize="14" fontWeight="600" fill={fg}>{text}</text>
    </>
  );
}

function Office({ letter, color }: { letter: string; color: string }) {
  return (
    <>
      <path d="M16 4h12v22H16z" fill="#fff" stroke={color} strokeWidth="1.300" />
      <path d="M18 8h8M18 11h8M18 14h8M18 17h8M18 20h8M18 23h8" stroke={color} strokeWidth="1.500" />
      <path d="M1 4.500L17 1v28L1 25.500z" fill={color} />
      <text x="9" y="20" textAnchor="middle" fontFamily="Open Sans" fontSize="13" fontWeight="700" fill="#fff">{letter}</text>
    </>
  );
}

const APPS: { name: string; active?: boolean; open?: boolean; large?: boolean; art: React.ReactNode }[] = [
  { name: "Explorador", art: <><path d="M1 3h11l2 3H1z" fill="#e59400" /><path d="M1 5h28v20H1z" fill="#ffd766" /><path d="M6 26V16a2 2 0 0 1 2-2h14a2 2 0 0 1 2 2v10h-5v-6h-8v6z" fill="#1283c9" /></> },
  { name: "Edge", art: <path d="M3 13.500C4 6 9 2 15.500 2 23 2 27 7.500 27 14v3H10.500c.3 4 3.500 6 7.500 6 3 0 5.500-.7 8-2.200V26c-2.500 1.400-5.500 2-9 2C9.500 28 5 23.500 5 17.500c0-4.500 2.500-8 6.500-10C7.500 8 5 10 3 13.500zM10.700 12.500H20c0-3-1.500-5-4.300-5-2.700 0-4.500 2-5 5z" fill="#0078d7" /> },
  { name: "Firefox", art: <><path d="M2 7l4-4 3 4 5-1 6-6c0 3 2 4 4 6l3 1c2 3 2 5 2 8a14 14 0 0 1-28 0c0-3 0-5 1-8z" fill="#18aaf5" /><path d="M20 1c4 3 7 8 7 14s-5 12-13 13c9 1 15-6 15-13 0-4-1-6-3-9l-2 1c-1-2-3-3-4-6z" fill="#2fe0f5" /><circle cx="15" cy="15" r="7" fill="#27309a" /><path d="M5 10c4 0 6-4 9-3-1 2 1 3 3 4-3 1-4 2-5 3-1 4 3 5 7 4-3 5-14 3-14-8z" fill="#1675e5" /></> },
  { name: "Chrome", active: true, art: <><circle cx="15" cy="15" r="14" fill="#fbc116" /><path d="M2.900 8A14 14 0 0 1 27.100 8H15l-5 10z" fill="#ea4335" /><path d="M2.900 8A14 14 0 0 0 15 29l6.200-10.500L15 21l-6-3z" fill="#2a9d4e" /><circle cx="15" cy="15" r="7" fill="#fff" /><circle cx="15" cy="15" r="5.300" fill="#1a7df0" /></> },
  { name: "Thunderbird", large: true, art: <><path d="M4 9C6 3 11 0 17 0c8 0 13 7 13 14 0 8-5 14-13 15l7-9V8z" fill="#1b62b4" /><path d="M12 2c8-2 15 5 14 14 0 5-3 9-7 12 3-7 4-14-2-19z" fill="#3d9be0" /><path d="M4 9C6 3 11 0 17 0c3 0 6 1 8 4C17 1 10 4 7 9z" fill="#163f82" /><path d="M2 12L18 8l6 8-5 9C10 28 3 23 2 12z" fill="#f5f7fa" /><path d="M2 12l11 5 5-9M19 25l-6-8" fill="none" stroke="#c2cad2" /><path d="M1 14c0 8 7 14 15 14-4 3-16 0-15-14z" fill="#1c3f83" /></> },
  { name: "Word", open: true, art: <Office letter="W" color="#1757a6" /> },
  { name: "Excel", art: <Office letter="X" color="#107240" /> },
  { name: "PowerPoint", art: <><Office letter="P" color="#f04923" /><path d="M18 6h9v9h-9z" fill="#fff" /><path d="M22 7a4 4 0 1 0 4 4h-4z" fill="#f04923" /></> },
  { name: "FileZilla", large: true, art: <><path d="M1 1h28v28H1z" fill="#b30000" stroke="#b30000" strokeWidth="2" strokeDasharray="2 1" /><path d="M9 5h14l-1 3.500H12L11 13h8l-.8 3.500H10L7.500 25H4z" fill="#fff" /><path d="M15 14.500h11l-.7 3-7 5.500H25l-1 3H12.500l.8-3 7-5.500H14z" fill="#fff" /></> },
  { name: "Slack", large: true, art: <><circle cx="15" cy="15" r="14.500" fill="#fff" /><g strokeWidth="3.400" strokeLinecap="round"><path d="M7.500 12.800H12M12.800 7.500v.1" stroke="#36c5f0" /><path d="M17.500 7.500V12M22.500 12.800v.1" stroke="#2eb67d" /><path d="M18 17.500h4.500M17.500 22.500v.1" stroke="#ecb22e" /><path d="M12.500 18v4.500M7.500 17.500v.1" stroke="#e01e5a" /></g></> },
  { name: "TeamViewer", large: true, art: <><path d="M0 0h30v30H0z" fill="#0a7ce0" /><circle cx="15" cy="15" r="12" fill="#fff" /><path d="M4 15l5-4.500v3h12v-3l5 4.500-5 4.500v-3H9v3z" fill="#0a6fd0" /></> },
  { name: "Creative Cloud", art: <><rect x="1" y="1" width="28" height="27" rx="4" fill="#d8070e" /><g fill="none" stroke="#fff" strokeWidth="1.300" strokeLinecap="round"><path d="M14 20H9.500a5.500 5.500 0 0 1-.5-11C11 6 14 5 17 5.500c4 .6 7 3.500 7.500 8 0 4-3 6.500-6.500 6.500-3 0-4.500-2-6-4.500C10.500 13 9 13 8 14.500" /><path d="M12 12.500c2-3 6-3.500 8.500-1 1.500 2 1 5-1 5.500-2.500.5-3.500-2-5-4.500-1.500-2-4-2-6-.5" /></g></> },
  { name: "Illustrator", art: <Adobe text="Ai" edge="#f77f00" bg="#2c0f00" fg="#f98500" /> },
  { name: "InDesign", art: <Adobe text="Id" edge="#f5348f" bg="#33041c" fg="#f5348f" /> },
  { name: "Photoshop", open: true, art: <Adobe text="Ps" edge="#16b8f3" bg="#03171f" fg="#a5e7ff" round /> },
  { name: "Acrobat", art: <AcrobatArt /> },
  { name: "XD", art: <Adobe text="Xd" edge="#ff26be" bg="#2e001e" fg="#fff" round /> },
  { name: "Atom", large: true, art: <><circle cx="15" cy="15" r="14.800" fill="#1fb57a" /><g fill="none" stroke="#fff" strokeWidth="1"><ellipse cx="15" cy="15" rx="10" ry="3.800" transform="rotate(-10 15 15)" /><ellipse cx="15" cy="15" rx="10" ry="3.800" transform="rotate(50 15 15)" /><ellipse cx="15" cy="15" rx="10" ry="3.800" transform="rotate(112 15 15)" /></g><circle cx="15" cy="15" r="1.300" fill="#fff" /></> },
  { name: "Git", large: true, art: <><path d="M15 1l6.500 6.500-3.500 3.500-3-2-3 2-4-3.500z" fill="#fa7d84" /><path d="M7 8.500l7 6.500-7 6.500L0 15z" fill="#62adf8" /><path d="M23 8.500l7 6.500-7 6.500-6.500-5 2.500-2 2 1z" fill="#5fd15c" /><path d="M13 17l2 2 2-2 5 5-7 6.500L8 22z" fill="#fddc70" /></> },
  { name: "XAMPP", large: true, art: <><rect width="30" height="30" rx="3" fill="#f86a12" /><path d="M13 10.500C13 6 5.500 6.500 5.500 11c0 2 1 3.200 2 4-1 .8-2 2-2 4 0 4.500 7.500 5 7.500.5M17 10.500c0-4.500 7.500-4 7.500.5 0 2-1 3.200-2 4 1 .8 2 2 2 4 0 4.500-7.500 5-7.500.5M11 15h8" fill="none" stroke="#fff" strokeWidth="3.600" strokeLinecap="round" /></> },
];

function Taskbar() {
  return (
    <footer className="flex h-[50px] shrink-0 items-stretch bg-linear-to-r from-[#c8e7f1] via-[#cbe3ee] to-[#d3deea] text-black">
      <button aria-label="Inicio" className="flex w-[63px] items-center pl-5">
        <svg viewBox="0 0 20 20" className="size-5"><path d="M0 3l8-1.100v7.600H0zM9 1.700L20 0v9.500H9zM0 10.500h8v7.600L0 17zM9 10.500h11V20L9 18.300z" /></svg>
      </button>
      {APPS.map((a) => (
        <button key={a.name} aria-label={a.name} className={`relative flex w-[62px] items-center justify-center ${a.active ? "bg-[#e9f5f9]" : ""}`}>
          <svg viewBox="0 0 30 30" className={a.large ? "size-[30px]" : "size-7"}>{a.art}</svg>
          {a.active && <span className="absolute inset-x-0 bottom-0 h-[3px] bg-[#0078d7]" />}
          {a.open && <span className="absolute inset-x-[6px] bottom-0 h-[3px] bg-[#0078d7]" />}
        </button>
      ))}
      <div className="ml-auto flex items-center">
        <svg viewBox="0 0 16 10" className="h-[10px] w-4" fill="none" stroke="currentColor" strokeWidth="1.300"><path d="M1 9l7-7.500L15 9" /></svg>
        <svg viewBox="0 0 20 14" className="ml-3 h-[14px] w-5" fill="none" stroke="currentColor" strokeWidth="1.300"><path d="M6 3.500h12v9H4V9" /><path d="M7.500 5h9v6h-9zM19 6v4" fill="currentColor" /><path d="M1 0v3M4 0v3M.5 3h4v3h-4zM2.500 6v5" /></svg>
        <svg viewBox="0 0 16 16" className="ml-3 size-4" fill="none" stroke="currentColor" strokeWidth="1.200"><path d="M1 15C1 7 7 1 15 1M5 15C5 9 9 5 15 5M9 15c0-4 2-6 6-6" /><circle cx="14" cy="14" r="1.300" fill="currentColor" /></svg>
        <svg viewBox="0 0 20 14" className="ml-[11px] h-[14px] w-5" fill="none" stroke="currentColor" strokeWidth="1.300"><path d="M1 4h3l4-3v12l-4-3H1zM11.500 4l7 6.500M18.500 4l-7 6.500" /></svg>
        <span className="ml-[15px] w-[26px] text-sm">ESP</span>
        <div className="ml-3 w-[84px] text-center text-sm leading-[23px]"><p>18:15</p><p>27/11/2019</p></div>
        <button aria-label="Notificaciones" className="relative ml-[18px] h-[30px] w-[31px]">
          <svg viewBox="0 0 20 20" className="size-5"><path d="M0 1h20v15H11l-4 4v-4H0z" /><path d="M4 5h12M4 8h12M4 11h12" stroke="#fff" strokeWidth="1.300" /></svg>
          <span className="absolute right-0 bottom-0 flex size-5 items-center justify-center rounded-full border border-[#777] bg-[#d0d3d6] text-[13px] font-semibold">4</span>
        </button>
        <span className="mr-[5px] ml-4 h-[50px] w-px bg-[#a7b0bb]" />
      </div>
    </footer>
  );
}

export default function App() {
  return (
    <div className="flex h-screen w-full flex-col overflow-hidden bg-white font-['Noto_Sans',sans-serif]">
      <ChromeBar />
      <div className="flex min-h-0 flex-1">
        <div className="flex min-w-0 flex-1 flex-col">
          <AdminBar />
          <div className="flex min-h-0 flex-1">
            <AdminMenu />
            <div className="flex min-w-0 flex-1 flex-col">
              <EditorHeader />
              <div className="flex min-h-0 flex-1">
                <Editor />
                <Scrollbar upDark top="flex-[670]" size="flex-[122]" bottom="flex-0" />
                <DocumentSidebar />
                <Scrollbar downDark top="flex-0" size="flex-[641]" bottom="flex-[148]" />
                <div className="w-[2px] bg-[#f1f1f1]" />
              </div>
            </div>
          </div>
        </div>
        <Scrollbar downDark top="flex-0" size="flex-[824]" bottom="flex-[75]" />
      </div>
      <Taskbar />
    </div>
  );
}
